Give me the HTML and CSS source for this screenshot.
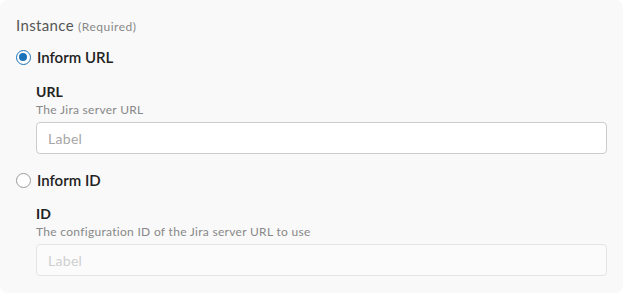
FILE: index.html
```html
<!DOCTYPE html>
<html>
<head>
<meta charset="utf-8">
<link rel="stylesheet" href="styles.css">
</head>
<body>
<div class="card">
  <div class="title">Instance <span class="req">(Required)</span></div>
  <div class="option">
    <div class="radio-row">
      <span class="radio checked"></span>
      <span class="radio-label">Inform URL</span>
    </div>
    <div class="field">
      <div class="field-label">URL</div>
      <div class="field-desc">The Jira server URL</div>
      <div class="input"><span class="placeholder">Label</span></div>
    </div>
  </div>
  <div class="option">
    <div class="radio-row">
      <span class="radio"></span>
      <span class="radio-label">Inform ID</span>
    </div>
    <div class="field">
      <div class="field-label">ID</div>
      <div class="field-desc">The configuration ID of the Jira server URL to use</div>
      <div class="input disabled"><span class="placeholder">Label</span></div>
    </div>
  </div>
</div>
</body>
</html>
```

FILE: styles.css
```css
html, body {
  margin: 0;
  padding: 0;
  background: #ffffff;
}
body {
  font-family: Lato, "Open Sans", sans-serif;
  color: #222;
}
.card {
  width: 623px;
  height: 293px;
  box-sizing: border-box;
  background: #f9f9f9;
  border-radius: 8px;
  padding: 15px 16px 16px 16px;
}
.title {
  font-size: 15px;
  line-height: 20px;
  color: #555;
  letter-spacing: 0.35px;
}
.req {
  font-size: 12px;
  color: #888;
  letter-spacing: 0.5px;
}
.option {
  display: flex;
  flex-direction: column;
}
.radio-row {
  display: flex;
  align-items: center;
  gap: 6px;
  height: 20px;
  margin-top: 10px;
}
.option + .option .radio-row {
  margin-top: 16px;
}
.radio {
  width: 15px;
  height: 15px;
  box-sizing: border-box;
  border: 1.5px solid #9a9a9a;
  border-radius: 50%;
  background: #fff;
  position: relative;
}
.radio.checked {
  border-color: #1a72b8;
}
.radio.checked::after {
  content: "";
  position: absolute;
  left: 2px;
  top: 2px;
  width: 8px;
  height: 8px;
  border-radius: 50%;
  background: #1a72b8;
}
.radio-label {
  font-size: 15px;
  font-weight: 600;
  color: #222;
}
.field {
  padding-left: 20px;
  margin-top: 15px;
  display: flex;
  flex-direction: column;
}
.option + .option .field {
  margin-top: 14px;
}
.field-label {
  font-size: 14px;
  font-weight: 700;
  line-height: 20px;
  color: #222;
}
.field-desc {
  font-size: 12px;
  line-height: 16px;
  color: #888;
  letter-spacing: 0.3px;
}
.input {
  margin-top: 4px;
  height: 32px;
  box-sizing: border-box;
  border: 1px solid #cccccc;
  border-radius: 4px;
  background: #fff;
  display: flex;
  align-items: center;
  padding-left: 11px;
}
.placeholder {
  font-size: 14px;
  color: #a6a6a6;
  letter-spacing: 0.3px;
}
.input.disabled {
  background: #fbfbfb;
  border-color: #e4e4e4;
}
.input.disabled .placeholder {
  color: #cfcfcf;
}
```
